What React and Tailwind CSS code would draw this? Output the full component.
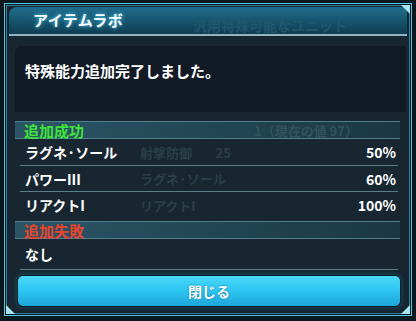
import React from 'react';

const font = { fontFamily: '"Noto Sans CJK JP", "Noto Sans", sans-serif' };

const Header = ({ label, color, ghost }) => (
    <div className="h-[18px] mr-[3px] border-y border-[#4f7f8e] bg-gradient-to-r from-[#2b5566] via-[#234654] to-[#1c3744] grid grid-cols-[230px_1fr] items-center pl-[9px]">
        <span className={`text-[15px] font-bold leading-none ${color}`}>{label}</span>
        <span className="text-[13px] font-bold leading-none text-[#33535f]">{ghost}</span>
    </div>
);

const Row = ({ name, value, ghost, h = 'h-[26px]', line = true }) => (
    <div className={`${h} mx-[5px] grid grid-cols-[115px_1fr_auto] items-center pl-[5px] pr-[2px] ${line ? 'border-b border-[#5d7c88]' : ''}`}>
        <span className="text-[14px] font-bold text-white leading-none">{name}</span>
        <span className="text-[13px] font-bold text-[#2a3e49] leading-none whitespace-pre">{ghost}</span>
        <span className="text-[14px] font-bold text-white leading-none">{value}</span>
    </div>
);

const App = () => {
    return (
        <div className="w-[416px] h-[321px] bg-[#0a1820] pt-[3px] pl-[4px] overflow-hidden" style={font}>
            <div className="w-[408px] h-[313px] border border-[#52c6e6] p-[1px] relative">
                <div className="h-full border border-[#2c7f99] bg-[#182631] flex flex-col">
                    {/* title bar */}
                    <div className="h-[29px] ml-[2px] mt-[1px] mr-[2px] rounded-tl-[8px] border-b-2 border-[#8fb6c2] bg-gradient-to-b from-[#1f6d8c] via-[#175570] to-[#0f3d52] flex items-center justify-between pl-[24px] pr-[60px]">
                        <span className="text-[15px] font-bold text-white tracking-wide [text-shadow:0_0_4px_#4fd0ff]">アイテムラボ</span>
                        <span className="text-[14px] font-bold text-[#22566b] leading-none pt-[8px]">汎用特殊可能なユニット</span>
                    </div>

                    {/* message */}
                    <div className="mt-[10px] ml-[8px] mr-[3px] h-[66px] bg-[#121a26] rounded-tl-[6px] flex items-start pt-[17px] pl-[10px]">
                        <span className="text-[15px] font-bold text-white leading-none">特殊能力追加完了しました。</span>
                    </div>

                    <div className="mt-[9px] ml-[8px] mr-[6px] flex flex-col">
                        <Header label="追加成功" color="text-[#3fe33a]" ghost="1（現在の値 97）" />
                        <Row name="ラグネ·ソール" value="50%" ghost={'射撃防御        25'} h="h-[27px]" />
                        <Row name="パワーIII" value="60%" ghost="ラグネ·ソール" />
                        <Row name="リアクトI" value="100%" ghost="リアクトI" line={false} />
                        <div className="h-[3px]" />
                        <Header label="追加失敗" color="text-[#e8442e]" />
                        <Row name="なし" value="" h="h-[31px]" />
                    </div>

                    {/* button */}
                    <div className="mt-[5px] ml-[10px] mr-[8px] rounded-[6px] bg-[#0b1d26] p-[1px] shadow-[0_0_4px_#0f5e78]">
                        <button className="w-full h-[30px] rounded-[5px] bg-gradient-to-b from-[#4ad9fb] via-[#2cc4f0] to-[#1ea6da] flex items-center justify-center">
                            <span className="text-[14px] font-bold text-white leading-none [text-shadow:0_0_2px_#1a6f90]">閉じる</span>
                        </button>
                    </div>
                </div>

                {/* corner accents */}
                <div className="absolute left-[1px] bottom-[1px] w-0 h-0 border-l-[9px] border-l-[#a9e4f2] border-t-[9px] border-t-transparent" />
                <div className="absolute right-[1px] bottom-[1px] w-0 h-0 border-r-[9px] border-r-[#a9e4f2] border-t-[9px] border-t-transparent" />
                <div className="absolute right-[1px] top-[1px] w-0 h-0 border-r-[9px] border-r-[#a9e4f2] border-b-[9px] border-b-transparent" />
            </div>
        </div>
    );
};

export default App;
